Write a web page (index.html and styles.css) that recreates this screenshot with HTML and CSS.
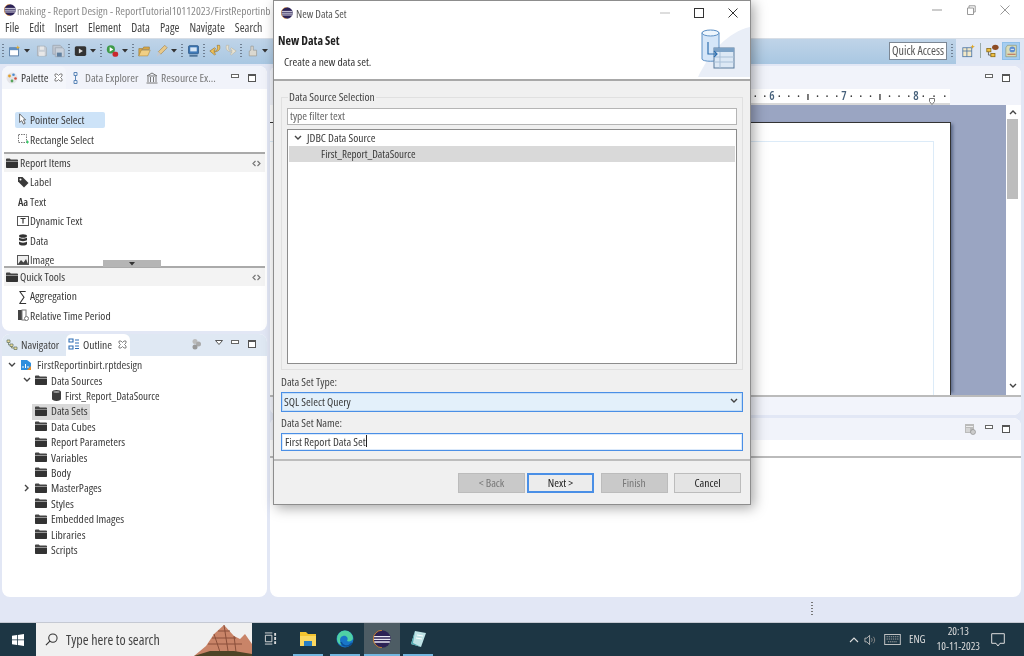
FILE: index.html
```html
<!DOCTYPE html>
<html lang="en">
<head>
<meta charset="utf-8">
<title>Report Design</title>
<link rel="stylesheet" href="styles.css">
</head>
<body>
<svg class="defs" aria-hidden="true">
  <symbol id="folder" viewBox="0 0 12 10"><path d="M0 2V1.2C0 .7.4.4.8.4h3l1 1.1h6.4c.4 0 .8.3.8.7V3H0z" fill="#444"/><path d="M0 3.4h12v5.8c0 .4-.3.7-.7.7H.7c-.4 0-.7-.3-.7-.7z" fill="#333"/></symbol>
  <symbol id="db" viewBox="0 0 10 12"><path d="M0 2c0-1 2-2 5-2s5 1 5 2v8c0 1-2 2-5 2s-5-1-5-2z" fill="#3d3d3d"/><ellipse cx="5" cy="2.2" rx="3.6" ry="1.1" fill="#999"/></symbol>
  <symbol id="min" viewBox="0 0 8 4"><rect x=".5" y=".5" width="7" height="3" fill="#fff" stroke="#666"/></symbol>
  <symbol id="max" viewBox="0 0 8 8"><rect x=".5" y=".5" width="7" height="7" fill="#fff" stroke="#555"/><rect width="8" height="2" fill="#555"/></symbol>
  <symbol id="close" viewBox="0 0 9 9"><path d="M1 1l2 0 1.5 1.5L6 1h2v2L6.500 4.500 8 6v2H6L4.500 6.500 3 8H1V6l1.500-1.500L1 3z" fill="#fff" stroke="#666" stroke-width=".8"/></symbol>
  <symbol id="chev" viewBox="0 0 8 6"><path d="M1 1l3 3 3-3" fill="none" stroke="#444" stroke-width="1.400"/></symbol>
  <symbol id="caret" viewBox="0 0 6 4"><path d="M0 0h6L3 3.500z" fill="#333"/></symbol>
  <symbol id="eclipse" viewBox="0 0 12 12"><circle cx="6" cy="6" r="5.800" fill="#2c2255"/><path d="M.6 4.400h10.800M.4 6.200h11.200M.8 8h10.400" stroke="#e8e6f2" stroke-width=".9"/><path d="M6 .2A5.800 5.800 0 0 0 6 11.800" fill="none" stroke="#f0962a" stroke-width=".5"/></symbol>
  <symbol id="collapse" viewBox="0 0 9 7"><path d="M3.500 1L1 3.500 3.500 6M5.500 1L8 3.500 5.500 6" fill="none" stroke="#777" stroke-width="1.200"/></symbol>
</svg>
<div class="app">
  <header class="window-head">
    <div class="title-row">
      <svg class="ico12"><use href="#eclipse"/></svg>
      <span class="title-text">making - Report Design - ReportTutorial10112023/FirstReportinb</span>
      <div class="win-controls">
        <svg class="wc" viewBox="0 0 10 10"><path d="M0 5h10" stroke="#aaa" stroke-width="1.200"/></svg>
        <svg class="wc" viewBox="0 0 10 10"><path d="M1.500 3h6v6.500h-6zM3 3V.8h6.200V7H7.500" fill="none" stroke="#999"/></svg>
        <svg class="wc" viewBox="0 0 10 10"><path d="M.5.500l9 9M9.500.500l-9 9" stroke="#999"/></svg>
      </div>
    </div>
    <nav class="menu-row">
      <span>File</span><span>Edit</span><span>Insert</span><span>Element</span><span>Data</span><span>Page</span><span>Navigate</span><span>Search</span><span>R</span>
    </nav>
  </header>

  <div class="toolbar">
    <div class="tools">
      <i class="grip first"></i>
      <svg class="ti" viewBox="0 0 16 16"><rect x="2" y="4" width="11" height="10" fill="#fff" stroke="#48709c"/><rect x="2" y="4" width="11" height="3" fill="#5f8fc2"/><path d="M12 1l1 2 2 .5-2 .8-1 2-.8-2-2-.8 2-.5z" fill="#e2ad34"/></svg>
      <svg class="caret"><use href="#caret"/></svg>
      <svg class="ti t-gap" viewBox="0 0 16 16"><path d="M3 2h9l2 2v10H3z" fill="#c9cfd6" stroke="#a6acb3"/><rect x="6" y="2.500" width="5" height="4" fill="#e8e8e8"/><rect x="5" y="9" width="7" height="5" fill="#e8e8e8"/></svg>
      <svg class="ti t-gap" viewBox="0 0 16 16"><path d="M1 1h9l2 2v9H1z" fill="#c0c8d2" stroke="#9ea6b1"/><path d="M4 4h9l2 2v9H4z" fill="#c9d1db" stroke="#9ea6b1"/><rect x="6" y="10" width="6" height="5" fill="#5f7f9f"/></svg>
      <i class="grip"></i>
      <svg class="ti" viewBox="0 0 16 16"><rect x="1" y="2" width="14" height="12" rx="2" fill="#333"/><path d="M6 5l5 3-5 3z" fill="#ddd"/></svg>
      <svg class="caret"><use href="#caret"/></svg>
      <i class="grip"></i>
      <svg class="ti" viewBox="0 0 16 16"><circle cx="6" cy="6" r="5" fill="#3f9b4a"/><path d="M4.500 3l4.500 3-4.500 3z" fill="#fff"/><rect x="8" y="9" width="7" height="6" rx="2.500" fill="#c9282d"/></svg>
      <svg class="caret"><use href="#caret"/></svg>
      <i class="grip"></i>
      <svg class="ti" viewBox="0 0 16 16"><path d="M1 5h5l1-2h7v3H5l-3 8H1z" fill="#d9a94a" stroke="#8a6a2a" stroke-width=".6"/><path d="M4 7h11l-3 7H1z" fill="#f0cf85" stroke="#a07a30" stroke-width=".6"/></svg>
      <svg class="ti t-gap" viewBox="0 0 16 16"><path d="M12 1l3 3-8 8-3-3z" fill="#e8c98a" stroke="#8f6d35" stroke-width=".6"/><path d="M4 9l3 3-5 3z" fill="#c2c8d0"/></svg>
      <svg class="caret"><use href="#caret"/></svg>
      <i class="grip"></i>
      <svg class="ti" viewBox="0 0 16 16"><rect x="2" y="1.500" width="12" height="10" rx="1" fill="#3e79b8" stroke="#234f80"/><rect x="4" y="3.500" width="8" height="5" fill="#d5e5f5"/><path d="M3 14h10" stroke="#4a6f95" stroke-width="2"/></svg>
      <i class="grip"></i>
      <svg class="ti" viewBox="0 0 16 16"><path d="M13 1c1 4 0 7-5 8H6l2 3-1 1-6-5 6-4 1 1-2 3h2c3-1 3-4 2-7z" fill="#f0c25a" stroke="#8f6a1f" stroke-width=".7"/></svg>
      <svg class="ti t-gap3" viewBox="0 0 16 16"><path d="M3 1C2 5 3 8 8 9h2l-2 3 1 1 6-5-6-4-1 1 2 3H8C5 7 5 4 6 1z" fill="#e9e4d3" stroke="#b5b0a0" stroke-width=".7"/></svg>
      <i class="grip"></i>
      <svg class="ti" viewBox="0 0 16 16"><path d="M6 2h3v5h4v7H4V8l2-1z" fill="#dad8d0" stroke="#8e8c85" stroke-width=".7"/></svg>
      <svg class="caret"><use href="#caret"/></svg>
    </div>
    <div class="toolbar-end">
      <span class="quick">Quick Access</span>
      <i class="grip"></i>
      <div class="perspectives">
        <svg class="ti" viewBox="0 0 16 16"><rect x="1" y="4" width="11" height="11" fill="#f3e8c6" stroke="#4a74a5"/><path d="M1 8h11M6 4v11" stroke="#4a74a5"/><path d="M13 0l1 2 2 .5-2 .8-1 2-.8-2-2-.8 2-.5z" fill="#e0a520"/></svg>
        <i class="pdiv"></i>
        <svg class="ti" viewBox="0 0 16 16"><rect x="1" y="5" width="5" height="4" fill="#f0c040" stroke="#8c6a12"/><rect x="6" y="11" width="5" height="4" fill="#f0c040" stroke="#8c6a12"/><path d="M3 9v4h3" stroke="#555" fill="none"/><ellipse cx="11.500" cy="3.500" rx="4" ry="3.200" fill="#8c4b24"/></svg>
        <span class="pactive"><svg class="ti" viewBox="0 0 16 16"><path d="M3 1h11v14H1V4z" fill="#d9dcb8" stroke="#7c8a70" stroke-width=".7"/><circle cx="9" cy="6" r="3.500" fill="#5d8dd0"/><path d="M7 6h4" stroke="#fff"/><path d="M3 12h10" stroke="#b24a36"/></svg></span>
      </div>
    </div>
  </div>

  <main class="workspace">
    <div class="col-left">
      <section class="panel palette">
        <div class="tabbar tabbar-light">
          <div class="tab tab-on tab-palette">
            <svg class="ico12" viewBox="0 0 12 12"><circle cx="6" cy="6" r="5.500" fill="#e4e4e8"/><circle cx="3.500" cy="4" r="1.400" fill="#e2a02a"/><circle cx="7.500" cy="2.800" r="1.300" fill="#4a8bd0"/><circle cx="9.500" cy="6.500" r="1.300" fill="#d4503c"/><circle cx="6" cy="9" r="1.400" fill="#56a45a"/></svg>
            <span>Palette</span>
            <svg class="ico9"><use href="#close"/></svg>
          </div>
          <div class="tab tab-off t-explorer">
            <svg class="ico12" viewBox="0 0 12 12"><path d="M4 .500h3v3H4zM4 8.500h3v3H4zM5.500 3.500v5" fill="none" stroke="#5d87b8"/></svg>
            <span>Data Explorer</span>
          </div>
          <div class="tab tab-off t-resource">
            <svg class="ico12" viewBox="0 0 12 12"><path d="M1 4l5-3 5 3zM2 5v5M4.500 5v5M7.500 5v5M10 5v5M.5 11h11" fill="none" stroke="#777"/></svg>
            <span>Resource Ex...</span>
          </div>
          <div class="tab-actions">
            <svg class="ico-min"><use href="#min"/></svg>
            <svg class="ico-max"><use href="#max"/></svg>
          </div>
        </div>
        <div class="palette-body">
          <div class="tools-top">
            <div class="pal-row pal-selected"><svg class="ico12" viewBox="0 0 12 14"><path d="M2 1v10l2.500-2 2 4 2-1-2-4H9z" fill="#fff" stroke="#555"/></svg><span>Pointer Select</span></div>
            <div class="pal-row"><svg class="ico12" viewBox="0 0 12 12"><rect x="1.500" y="1.500" width="8" height="8" fill="none" stroke="#777" stroke-dasharray="1.500 1"/><path d="M9 9h3M10.500 7.500v3" stroke="#3c6"/></svg><span>Rectangle Select</span></div>
          </div>
          <div class="drawer-head">
            <svg class="ico-folder"><use href="#folder"/></svg><span>Report Items</span><svg class="ico-coll"><use href="#collapse"/></svg>
          </div>
          <div class="drawer-items report-items">
            <div class="pal-row"><svg class="ico12" viewBox="0 0 12 12"><path d="M1 1h4.500l6 6-4.500 4.500-6-6z" fill="#3a3a3a"/><circle cx="3.500" cy="3.500" r="1" fill="#fff"/></svg><span>Label</span></div>
            <div class="pal-row"><span class="aa">Aa</span><span>Text</span></div>
            <div class="pal-row"><svg class="ico12" viewBox="0 0 12 12"><rect x=".5" y="1.500" width="11" height="9" fill="none" stroke="#555"/><path d="M3.500 3.500h5M6 3.500v5" stroke="#333" stroke-width="1.200"/></svg><span>Dynamic Text</span></div>
            <div class="pal-row"><svg class="ico12" viewBox="0 0 10 12"><ellipse cx="5" cy="2" rx="4" ry="1.800" fill="#333"/><path d="M1 3.500c1 1.500 7 1.500 8 0V6c-1 1.500-7 1.500-8 0zM1 7.500c1 1.500 7 1.500 8 0V10c-1 2-7 2-8 0z" fill="#333"/></svg><span>Data</span></div>
            <div class="pal-row"><svg class="ico12" viewBox="0 0 12 12"><rect x=".5" y="1.500" width="11" height="9" fill="#eee" stroke="#555"/><path d="M1 10l3-4 2.500 2.500L9 5l2 5z" fill="#444"/></svg><span>Image</span></div>
          </div>
          <i class="drawer-scroll"><svg class="ico-scroll"><use href="#caret"/></svg></i>
          <div class="drawer-head">
            <svg class="ico-folder"><use href="#folder"/></svg><span>Quick Tools</span><svg class="ico-coll"><use href="#collapse"/></svg>
          </div>
          <div class="drawer-items quick-items">
            <div class="pal-row"><span class="aa sigma">∑</span><span>Aggregation</span></div>
            <div class="pal-row"><svg class="ico12" viewBox="0 0 12 12"><rect x="1" y="1" width="4" height="10" fill="#444"/><rect x="5" y="1" width="4" height="10" fill="none" stroke="#777"/><circle cx="9.500" cy="9.500" r="2" fill="#fff" stroke="#777"/></svg><span>Relative Time Period</span></div>
          </div>
        </div>
      </section>

      <section class="panel outline">
        <div class="tabbar tabbar-blue">
          <div class="tab tab-off t-nav">
            <svg class="ico12" viewBox="0 0 12 12"><path d="M1 2h3v2.500H1zM4 6h3v2.500H4zM8 9h3v2.500H8zM2.500 4.500V7H4M5.500 8.500V10H8" fill="#eedc9a" stroke="#6d7d6d" stroke-width=".8"/></svg>
            <span class="txt-strong">Navigator</span>
          </div>
          <div class="tab tab-on t-outline">
            <svg class="ico12" viewBox="0 0 12 12"><path d="M1 1h4v3H1zM1 8h4v3H1zM7 2h4M7 5h4M7 8h4M7 10.500h4" fill="none" stroke="#2f6eb5" stroke-width="1.100"/></svg>
            <span>Outline</span>
            <svg class="ico9"><use href="#close"/></svg>
          </div>
          <div class="tab-actions">
            <svg class="ico12" viewBox="0 0 12 12"><circle cx="5" cy="3.500" r="2.500" fill="#bbb"/><circle cx="8.500" cy="6" r="2.500" fill="#aaa"/><circle cx="5" cy="9" r="2.500" fill="#999"/></svg>
            <svg class="ico-tri" viewBox="0 0 8 5"><path d="M.5.500h7L4 4.500z" fill="#fff" stroke="#555"/></svg>
            <svg class="ico-min"><use href="#min"/></svg>
            <svg class="ico-max"><use href="#max"/></svg>
          </div>
        </div>
        <div class="tree">
          <div class="tree-row root"><svg class="ico-chev"><use href="#chev"/></svg><svg class="ico12" viewBox="0 0 12 12"><path d="M1 1h6l4 3v7H1z" fill="#2f8fdd"/><path d="M3 9V7M5.500 9V5M8 9V7" stroke="#fff"/><path d="M7 11l4-4v4z" fill="#e8902a"/></svg><span class="txt-strong">FirstReportinbirt.rptdesign</span></div>
          <div class="tree-row l1"><svg class="ico-chev"><use href="#chev"/></svg><svg class="ico-folder"><use href="#folder"/></svg><span>Data Sources</span></div>
          <div class="tree-row l2"><svg class="ico-db"><use href="#db"/></svg><span>First_Report_DataSource</span></div>
          <div class="tree-row l1 nochev is-sel"><svg class="ico-folder"><use href="#folder"/></svg><span>Data Sets</span></div>
          <div class="tree-row l1 nochev"><svg class="ico-folder"><use href="#folder"/></svg><span>Data Cubes</span></div>
          <div class="tree-row l1 nochev"><svg class="ico-folder"><use href="#folder"/></svg><span>Report Parameters</span></div>
          <div class="tree-row l1 nochev"><svg class="ico-folder"><use href="#folder"/></svg><span>Variables</span></div>
          <div class="tree-row l1 nochev"><svg class="ico-folder"><use href="#folder"/></svg><span>Body</span></div>
          <div class="tree-row l1"><svg class="ico-chev rot"><use href="#chev"/></svg><svg class="ico-folder"><use href="#folder"/></svg><span>MasterPages</span></div>
          <div class="tree-row l1 nochev"><svg class="ico-folder"><use href="#folder"/></svg><span>Styles</span></div>
          <div class="tree-row l1 nochev"><svg class="ico-folder"><use href="#folder"/></svg><span>Embedded Images</span></div>
          <div class="tree-row l1 nochev"><svg class="ico-folder"><use href="#folder"/></svg><span>Libraries</span></div>
          <div class="tree-row l1 nochev"><svg class="ico-folder"><use href="#folder"/></svg><span>Scripts</span></div>
        </div>
      </section>
    </div>

    <div class="col-right">
      <section class="panel editor">
        <div class="tabbar tabbar-light editor-tabs">
          <div class="tab-actions">
            <svg class="ico-min"><use href="#min"/></svg>
            <svg class="ico-max"><use href="#max"/></svg>
          </div>
        </div>
        <div class="ruler">
          <div class="ruler-scale">
            <span class="tick t-a">· ·</span><b>6</b><span class="tick">· · · ı · · ·</span><b>7</b><span class="tick">· · · ı · · ·</span><b>8</b><span class="tick t-b">· · ·</span>
            <svg class="ruler-mark" viewBox="0 0 6 7"><path d="M.5.500h5v3L3 6.500.5 3.500z" fill="#fff" stroke="#777"/></svg>
          </div>
        </div>
        <div class="canvas-wrap">
          <div class="canvas">
            <div class="sheet"><div class="sheet-margin"></div></div>
          </div>
          <div class="vscroll">
            <svg class="ico-chev up"><use href="#chev"/></svg>
            <i class="thumb"></i>
            <svg class="ico-chev"><use href="#chev"/></svg>
          </div>
        </div>
        <div class="editor-foot"></div>
      </section>
      <section class="panel lower">
        <div class="tabbar tabbar-light editor-tabs lower-tabs">
          <div class="tab-actions">
            <svg class="ico12" viewBox="0 0 12 12"><rect x="1" y="1" width="9" height="9" fill="#bbb"/><path d="M2 3.500h7M2 6h4M2 8h4" stroke="#eee"/><circle cx="9" cy="9" r="2.500" fill="#ccc" stroke="#888" stroke-width=".6"/></svg>
            <svg class="ico-min"><use href="#min"/></svg>
            <svg class="ico-max"><use href="#max"/></svg>
          </div>
        </div>
        <div class="lower-blank"></div>
      </section>
    </div>
    <div class="status-strip"><i class="status-grip"></i></div>
  </main>

  <footer class="taskbar">
    <svg class="win-logo" viewBox="0 0 12 12"><path d="M0 1.700L5 1v4.500H0zM5.800.900L12 0v5.500H5.800zM0 6.300h5v4.700l-5-.7zM5.800 6.300H12V12l-6.200-.9z" fill="#fff"/></svg>
    <div class="search">
      <svg class="search-ico" viewBox="0 0 14 14"><circle cx="8.500" cy="5.500" r="4.500" fill="none" stroke="#333" stroke-width="1.100"/><path d="M5.300 8.700L1 13" stroke="#333" stroke-width="1.200"/></svg>
      <span>Type here to search</span>
      <svg class="mountain" viewBox="0 0 58 34"><path d="M0 34L12 24 20 12 30 3 40 14 46 17 51 12 58 22V34z" fill="#c98468"/><path d="M20 12l6 18M30 3l4 26M40 14l2 16M14 22h34M18 16h24M24 9h12" stroke="#8a4f3a" fill="none"/><path d="M0 34l16-5h24l18 3v2z" fill="#4d4426"/></svg>
    </div>
    <div class="task-icons">
      <div class="tk tk-view"><svg class="tk-ico" viewBox="0 0 14 14"><path d="M1 1h8M1 13h8M1.500 3.500h7v7h-7z" stroke="#ddd" fill="none"/><path d="M11 1h2v3h-2zM11 5.500h2v3h-2zM11 10h2v3h-2z" fill="#ddd"/></svg></div>
      <div class="tk tk-run"><svg class="tk-ico2" viewBox="0 0 18 18"><path d="M1 2h6l2 2h8v3H1z" fill="#f4c430"/><path d="M1 6h16v10H1z" fill="#fbd860"/><rect x="5" y="11" width="8" height="5" fill="#2a7fc4"/></svg></div>
      <div class="tk tk-run tk-edge"><svg class="tk-ico2" viewBox="0 0 18 18"><circle cx="9" cy="9" r="8.500" fill="#1976c8"/><path d="M1 9a8 8 0 0 1 16-1c0 3-4 4-6 3 2-3-1-6-4-5-4 1-4 7 0 9-4 0-6-3-6-6z" fill="#4fd1a5"/><path d="M5 12c1 4 7 6 11 1" stroke="#0c4f98" stroke-width="1.500" fill="none"/></svg></div>
      <div class="tk tk-active"><svg class="tk-ico2"><use href="#eclipse"/></svg></div>
      <div class="tk tk-run"><svg class="tk-ico2" viewBox="0 0 18 18"><path d="M6 1l11 2-5 14-10-3z" fill="#bfe3e6"/><path d="M6 1L2 14l10 3-8-4z" fill="#4fa7ae"/><path d="M8 5l6 1M7 8l6 1" stroke="#fff"/></svg></div>
    </div>
    <div class="tray">
      <svg class="tr-caret" viewBox="0 0 10 6"><path d="M1 5l4-4 4 4" fill="none" stroke="#ddd" stroke-width="1.100"/></svg>
      <svg class="tr-sound" viewBox="0 0 14 12"><path d="M1 4h2l3-3v10L3 8H1z" fill="none" stroke="#bbb"/><path d="M8 4c1 1 1 3 0 4M10 2.500c2 2 2 5 0 7" fill="none" stroke="#888"/></svg>
      <svg class="tr-kbd" viewBox="0 0 18 12"><rect x=".5" y=".5" width="17" height="11" fill="none" stroke="#ccc"/><path d="M2.500 3h13M2.500 5.500h13M4 8.500h10" stroke="#aaa" stroke-dasharray="1.500 .8"/></svg>
      <span class="tr-lang">ENG</span>
      <div class="tr-clock"><span>20:13</span><span>10-11-2023</span></div>
      <svg class="tr-note" viewBox="0 0 14 14"><path d="M.7.700h12.600v9.600H9L7 13l-2-2.700H.7z" fill="none" stroke="#ddd"/></svg>
    </div>
  </footer>

  <div class="dialog" role="dialog">
    <div class="dlg-title">
      <svg class="ico12"><use href="#eclipse"/></svg>
      <span>New Data Set</span>
      <div class="dlg-controls">
        <svg class="wc dlg-min" viewBox="0 0 10 10"><path d="M0 5h10" stroke="#bbb"/></svg>
        <svg class="wc" viewBox="0 0 10 10"><rect x=".5" y=".5" width="9" height="9" fill="none" stroke="#333"/></svg>
        <svg class="wc" viewBox="0 0 10 10"><path d="M.5.500l9 9M9.500.500l-9 9" stroke="#333"/></svg>
      </div>
    </div>
    <div class="dlg-head">
      <div class="dlg-head-text">
        <h1>New Data Set</h1>
        <p>Create a new data set.</p>
      </div>
      <svg class="dlg-art" viewBox="0 0 52 50"><path d="M52 0C30 5 12 25 0 50h52z" fill="#e9eef7"/><path d="M4 6c0-3 17-3 17 0v26c0 3-17 3-17 0z" fill="#d5e6f8" stroke="#5d90c5"/><ellipse cx="12.500" cy="6" rx="8.500" ry="3" fill="#eef6fd" stroke="#5d90c5"/><rect x="16" y="21" width="20" height="20" fill="#dce8f5" stroke="#5a7a9c"/><rect x="16" y="21" width="20" height="4" fill="#7da2c6"/><path d="M22 25v16M16 30h20M16 35h20" stroke="#a9c0d8"/><path d="M10 15v12h9M16 24l3 3-3 3" fill="none" stroke="#2d6fb0" stroke-width="1.200"/></svg>
    </div>
    <div class="dlg-body">
      <fieldset class="ds-group">
        <legend>Data Source Selection</legend>
        <div class="field filter">type filter text</div>
        <div class="ds-tree">
          <div class="ds-row"><svg class="ico-chev"><use href="#chev"/></svg><span>JDBC Data Source</span></div>
          <div class="ds-row ds-sel"><span>First_Report_DataSource</span></div>
        </div>
      </fieldset>
      <label class="dlg-label">Data Set Type:</label>
      <div class="field focus combo"><span>SQL Select Query</span><svg class="ico-chev"><use href="#chev"/></svg></div>
      <label class="dlg-label lbl2">Data Set Name:</label>
      <div class="field focus name"><span>First Report Data Set</span><i class="cursor"></i></div>
    </div>
    <div class="dlg-foot">
      <span class="btn off">&lt; Back</span>
      <span class="btn default">Next &gt;</span>
      <span class="btn off btn-gap">Finish</span>
      <span class="btn btn-gap">Cancel</span>
    </div>
  </div>
</div>
</body>
</html>
```

FILE: styles.css
```css
* { box-sizing: border-box; }
html, body { margin: 0; padding: 0; }
body {
  width: 1024px; height: 656px; overflow: hidden;
  font-family: "Open Sans", "Liberation Sans", sans-serif;
  font-stretch: 75%;
  font-size: 11.500px; color: #3a3a3a; background: #fff;
}
svg { flex: none; display: block; }
i { display: block; font-style: normal; }
.defs { position: absolute; width: 0; height: 0; }

.app { position: relative; width: 1024px; height: 656px; display: flex; flex-direction: column; filter: blur(.35px); }

/* window head */
.window-head { height: 38px; background: #fff; flex: none; }
.title-row { height: 20px; display: flex; align-items: center; padding-left: 4px; gap: 1px; color: #8a8a8a; font-size: 11.400px; }
.ico12 { width: 12px; height: 12px; }
.title-text { white-space: nowrap; }
.win-controls { margin-left: auto; display: flex; gap: 24px; padding-right: 14px; }
.wc { width: 10px; height: 10px; }
.menu-row { height: 18px; display: flex; align-items: center; padding: 0 0 4px 5px; gap: 10px; color: #444; font-size: 11.800px; }

/* toolbar */
.toolbar { height: 26px; flex: none; display: flex; background: linear-gradient(#bfd4e8, #a9c7e2); justify-content: space-between; border-top: 1px solid #d8dee6; }
.tools { display: flex; align-items: center; padding: 0 0 2px 2px; }
.grip { width: 2px; height: 14px; margin: 0 4px 0 3px; background: repeating-linear-gradient(#6f7f92 0 1px, transparent 1px 3px); }
.grip.first { margin-left: 0; }
.ti { width: 13px; height: 14px; }
.t-gap { margin-left: 4px; }
.t-gap3 { margin-left: 2px; }
.caret { width: 6px; height: 4px; margin: 0 1px 0 3px; }
.toolbar-end { display: flex; align-items: center; padding-bottom: 0; }
.quick { width: 58px; height: 18px; margin-bottom: 2px; background: #fff; border: 1px solid #7c8794; font-size: 12px; display: flex; align-items: center; justify-content: center; color: #555; white-space: nowrap; padding-bottom: 1px; }
.toolbar-end > .grip { margin: 0 3px 2px 4px; }
.perspectives { width: 68px; align-self: stretch; background: #dfe7f5; display: flex; align-items: center; padding: 0 0 2px 6px; gap: 5px; }
.pdiv { width: 1px; height: 15px; background: #9aa; }
.pactive { width: 18px; height: 18px; background: #a5cdf0; border: 1px solid #8fbfe8; display: flex; align-items: center; justify-content: center; margin-left: -2px; }

/* workspace */
.workspace { position: relative; flex: 1; background: #e2e7f5; display: grid; grid-template-columns: 265px 1fr; grid-template-rows: 1fr 25px; column-gap: 3px; padding: 2px 3px 0 2px; }
.col-left, .col-right { display: flex; flex-direction: column; gap: 3px; min-height: 0; }
.status-strip { grid-column: 1 / 3; display: flex; align-items: center; padding-left: 809px; }
.status-grip { width: 2px; height: 15px; background: repeating-linear-gradient(#777 0 1px, transparent 1px 3px); }
.panel { background: #fff; border-radius: 8px; overflow: hidden; display: flex; flex-direction: column; }
.palette { height: 265px; flex: none; }
.outline { flex: 1; }
.editor { height: 349px; flex: none; }
.lower { flex: 1; }

.tabbar { display: flex; align-items: stretch; flex: none; position: relative; }
.tabbar-light { height: 23px; background: #f1f3fa; }
.tabbar-blue { height: 22px; background: #dfe8f3; }
.tab { display: flex; align-items: center; white-space: nowrap; }
.tab-on { background: #fff; }
.tab-off { color: #777; }
.tab-palette { width: 64px; background: #f4f6fb; padding-left: 4px; gap: 3px; border-radius: 6px 6px 0 0; }
.ico9 { width: 9px; height: 9px; margin-left: 3px; }
.t-explorer { padding-left: 4px; gap: 3px; width: 79px; }
.t-resource { padding-left: 1px; gap: 3px; }
.tab-actions { margin-left: auto; display: flex; align-items: center; gap: 9px; padding-right: 11px; }
.ico-min { width: 8px; height: 4px; margin-top: -4px; }
.ico-max { width: 8px; height: 8px; }
.ico-tri { width: 8px; height: 5px; margin: -4px -1px 0 4px; }
.t-nav { width: 64px; padding: 0 0 2px 4px; gap: 3px; }
.t-outline { width: 64px; padding: 0 0 2px 2px; gap: 3px; border-radius: 6px 6px 0 0; }
.tabbar-blue .tab-actions { padding-bottom: 2px; }
.txt-strong { color: #444; }

/* palette */
.palette-body { flex: 1; display: flex; flex-direction: column; padding: 0 2px; position: relative; }
.tools-top { height: 63px; padding: 23px 0 0 11px; display: flex; flex-direction: column; }
.pal-row { height: 19.500px; flex: none; display: flex; align-items: center; gap: 1px; padding: 0 0 2px 2px; white-space: nowrap; }
.pal-selected { width: 90px; height: 16px; background: #cde3f8; margin-bottom: 2px; border-radius: 2px; }
.tools-top .pal-row + .pal-row { height: 20px; }
.drawer-head { height: 20px; flex: none; border-top: 2px solid #aaa; background: #f3f3f3; display: flex; align-items: center; padding: 0 4px 0 2px; gap: 2px; }
.drawer-head span { margin-top: -1px; }
.drawer-head .ico-coll { margin-left: auto; }
.ico-folder { width: 12px; height: 10px; }
.ico-coll { width: 9px; height: 7px; }
.drawer-items { padding-left: 11px; display: flex; flex-direction: column; }
.report-items { height: 94px; flex: none; padding-top: 1px; }
.quick-items { padding-top: 1px; }
.aa { width: 12px; font-size: 11px; color: #333; font-weight: 600; text-align: center; }
.sigma { font-size: 14px; font-weight: 400; }
.drawer-scroll { position: absolute; left: 101px; top: 171px; width: 58px; height: 7px; background: #b5b5b5; display: flex; justify-content: center; align-items: center; }
.ico-scroll { width: 6px; height: 4px; }

/* outline tree */
.tree { padding: 2px 0 0 0; flex: 1; }
.tree-row { height: 15.400px; display: flex; align-items: center; white-space: nowrap; gap: 4px; width: max-content; padding-bottom: 2px; }
.ico-chev { width: 8px; height: 6px; }
.rot { transform: rotate(-90deg); }
.root { padding-left: 6px; gap: 4px; }
.root .ico12 { margin-right: 1px; }
.l1 { padding-left: 21px; gap: 4px; }
.l1.nochev { padding-left: 3px; margin-left: 30px; }
.l1.is-sel { background: #d9d9d9; padding-right: 2px; }
.l2 { padding-left: 50px; gap: 4px; font-size: 11px; }
.ico-db { width: 9px; height: 11px; }

/* editor */
.col-right { min-width: 0; }
.ruler { height: 16px; flex: none; background: #f1f3fa; display: flex; padding-left: 481px; }
.ruler-scale { width: 199px; background: #fff; display: flex; align-items: center; color: #333; font-size: 10px; white-space: nowrap; position: relative; border-bottom: 2px solid #d8d8d8; padding-bottom: 1px; }
.ruler-scale b { font-weight: 600; color: #45607a; width: 6px; text-align: center; font-size: 12px; }
.tick { display: block; width: 66px; padding: 0 3px; font-weight: 700; text-align: justify; text-align-last: justify; white-space: normal; }
.t-a { width: 18px; }
.t-b { width: 30px; }
.ruler-mark { position: absolute; right: 15px; bottom: -2px; width: 6px; height: 7px; }
.canvas-wrap { flex: 1; display: flex; min-height: 0; }
.canvas { flex: 1; background: linear-gradient(90deg, #fff 481px, #9aa5c2 481px); padding: 17px 55px 0 0; min-width: 0; }
.sheet { height: 100%; width: 100%; background: #fff; border-top: 1px solid #333; border-right: 1px solid #333; padding: 18px 16px 0 0; box-shadow: 4px 0 3px -2px #5d6a89; }
.sheet-margin { height: 100%; border-top: 1px solid #dcebf8; border-right: 1px solid #dcebf8; }
.vscroll { width: 15px; background: #fff; display: flex; flex-direction: column; align-items: center; padding: 0 3px 0 1px; }
.vscroll .ico-chev { margin: 4px 0; }
.up { transform: rotate(180deg); }
.thumb { flex: none; width: 100%; height: 80px; background: #bdbdbd; }
.vscroll .ico-chev:last-child { margin: auto 0 6px; }
.editor-foot { height: 20px; flex: none; background: #f2f4fb; border-top: 2px solid #bbb; }
.editor-tabs { justify-content: flex-end; }
.lower-tabs { height: 22px; }
.lower-blank { height: 18px; border-bottom: 2px solid #bbb; }

/* taskbar */
.taskbar { height: 34px; flex: none; background: #1d3644; display: flex; align-items: center; position: relative; border-top: 1px solid #c5c9d3; }
.win-logo { width: 12px; height: 12px; margin: 0 12px; }
.search { width: 216px; height: 33px; background: #f0f0f0; display: flex; align-items: center; padding-left: 9px; font-size: 14px; color: #444; position: relative; overflow: hidden; }
.search-ico { width: 13px; height: 13px; margin-right: 8px; }
.mountain { width: 58px; height: 34px; position: absolute; right: 0; bottom: 0; }
.task-icons { display: flex; height: 100%; margin-left: 7px; gap: 4px; }
.tk { width: 30px; height: 100%; display: flex; align-items: center; justify-content: center; border-bottom: 2px solid transparent; }
.tk-view { width: 22px; margin-right: 8px; }
.tk-run { border-bottom-color: #72b6df; }
.tk-edge { margin-left: 3px; }
.tk-active { width: 36px; background: #4d5c64; border-bottom-color: #72b6df; margin: 0 -1px 0 0; }
.tk-ico { width: 13px; height: 13px; }
.tk-ico2 { width: 18px; height: 18px; }
.tray { margin-left: auto; display: flex; align-items: center; color: #ddd; padding-right: 19px; font-size: 11px; }
.tr-caret { width: 10px; height: 6px; margin-right: 5px; }
.tr-sound { width: 13px; height: 12px; margin-right: 7px; }
.tr-kbd { width: 17px; height: 11px; margin-right: 8px; }
.tr-lang { margin: 0 11px 2px 0; }
.tr-clock { display: flex; flex-direction: column; align-items: center; line-height: 15px; margin: 0 11px 4px 0; }
.tr-note { width: 14px; height: 14px; }

/* dialog */
.dialog { position: absolute; left: 273px; top: 0; width: 478px; height: 505px; background: #f0f0f0; border: 1px solid #8d8d8d; box-shadow: 3px 3px 12px rgba(0,0,0,.35); display: flex; flex-direction: column; }
.dlg-title { height: 26px; flex: none; background: #fff; display: flex; align-items: center; padding: 0 0 2px 7px; gap: 3px; color: #555; font-size: 11px; }
.dlg-controls { margin-left: auto; display: flex; gap: 24px; padding-right: 12px; }
.dlg-head { height: 54px; flex: none; background: #fff; border-bottom: 2px solid #a8a8a8; display: flex; justify-content: space-between; position: relative; }
.dlg-head-text { padding: 5px 0 0 4px; }
.dlg-head h1 { margin: 0; font-size: 12px; color: #222; }
.dlg-head p { margin: 5px 0 0 6px; color: #333; }
.dlg-art { width: 52px; height: 50px; }
.dlg-body { height: 380px; flex: none; padding: 10px 7px 0; display: flex; flex-direction: column; border-bottom: 2px solid #bdbdbd; }
.ds-group { margin: 0; height: 279px; flex: none; border: 1px solid #e0e0e0; padding: 0 5px; display: flex; flex-direction: column; }
.ds-group legend { padding: 0 1px; color: #444; height: 13px; line-height: 11px; margin-left: 1px; }
.field { background: #fff; display: flex; align-items: center; flex: none; padding-bottom: 2px; }
.filter { height: 17px; border: 1px solid #b5b5b5; color: #666; padding-left: 2px; margin-top: 4px; }
.ds-tree { height: 235px; margin-top: 4px; background: #fff; border: 1px solid #8c8c8c; padding: 1px; }
.ds-row { height: 15.400px; display: flex; align-items: center; gap: 5px; padding: 0 0 2px 5px; }
.ds-sel { background: #d9d9d9; padding-left: 32px; font-size: 11px; }
.dlg-label { height: 13px; line-height: 11px; margin-top: 6px; color: #444; }
.lbl2 { margin-top: 5px; }
.focus { border: 1px solid #4a8fe6; box-shadow: inset 0 0 0 1px rgba(74,143,230,.2); margin-top: 3px; }
.combo { height: 20px; background: #e3f0fa; padding: 0 4px 2px 2px; justify-content: space-between; }
.name { height: 18px; padding-left: 3px; }
.cursor { width: 1px; height: 12px; background: #222; }
.dlg-foot { flex: 1; display: flex; justify-content: flex-end; padding: 12px 9px 0 0; gap: 2px; }
.btn { width: 67px; height: 20px; display: flex; align-items: center; justify-content: center; background: #e4e4e4; border: 1px solid #bcbcbc; color: #222; padding-bottom: 2px; }
.btn.off { background: #c9c9c9; color: #777; }
.btn.default { border: 2px solid #4a8fe6; background: #ececec; padding-bottom: 1px; }
.btn-gap { margin-left: 4.500px; }
```
